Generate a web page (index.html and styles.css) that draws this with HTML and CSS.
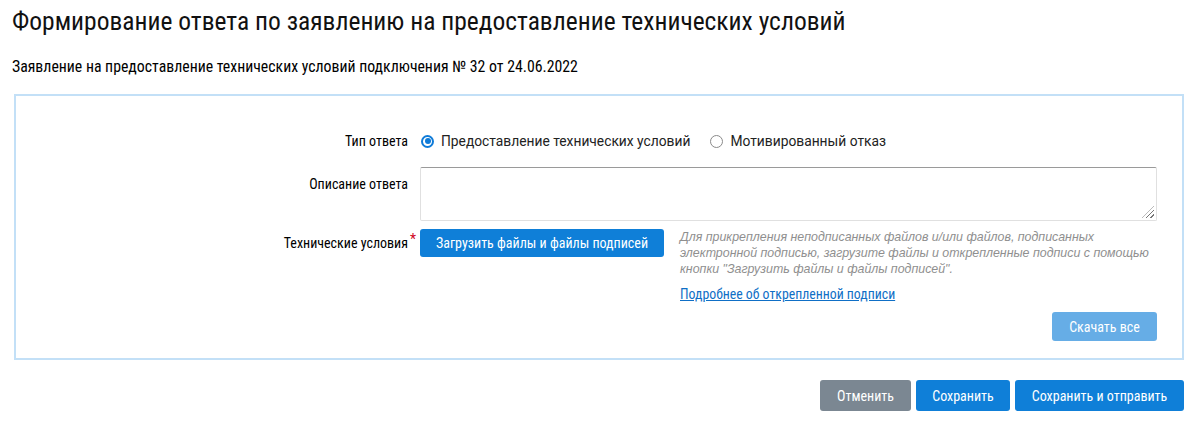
FILE: index.html
```html
<!DOCTYPE html>
<html lang="ru">
<head>
<meta charset="utf-8">
<link rel="stylesheet" href="styles.css">
</head>
<body>
<div class="page">
  <h1 class="title">Формирование ответа по заявлению на предоставление технических условий</h1>
  <div class="subtitle">Заявление на предоставление технических условий подключения № 32 от 24.06.2022</div>
  <div class="box">
    <div class="form">
      <div class="label label-radio">Тип ответа</div>
      <div class="radios">
        <label class="radio"><span class="dot on"></span>Предоставление технических условий</label>
        <label class="radio"><span class="dot"></span>Мотивированный отказ</label>
      </div>
      <div class="label label-top">Описание ответа</div>
      <div class="area"><span class="grip"></span></div>
      <div class="label label-btn"><span class="req-wrap">Технические условия<span class="req">*</span></span></div>
      <div class="files">
        <button class="btn btn-primary btn-upload">Загрузить файлы и файлы подписей</button>
        <div class="help">
          <p class="hint">Для прикрепления неподписанных файлов и/или файлов, подписанных электронной подписью, загрузите файлы и открепленные подписи с помощью кнопки "Загрузить файлы и файлы подписей".</p>
          <a class="link" href="#">Подробнее об открепленной подписи</a>
        </div>
      </div>
      <div class="download">
        <button class="btn btn-light">Скачать все</button>
      </div>
    </div>
  </div>
  <div class="actions">
    <button class="btn btn-gray">Отменить</button>
    <button class="btn btn-primary btn-act">Сохранить</button>
    <button class="btn btn-primary btn-act">Сохранить и отправить</button>
  </div>
</div>
</body>
</html>
```

FILE: styles.css
```css
* { box-sizing: border-box; }
html, body { margin: 0; padding: 0; background: #fff; }
body {
  font-family: "Roboto Condensed", "Liberation Sans Narrow", "DejaVu Sans Condensed", Roboto, sans-serif;
  font-stretch: condensed;
  color: #000;
}
.page { padding: 0 11px 0 14px; }
.title {
  margin: 0 0 0 -2px;
  padding-top: 6px;
  font-size: 25.5px;
  font-weight: 400;
  line-height: 30px;
  color: #111;
}
.subtitle {
  margin: 21px 0 0 -2px;
  font-size: 15.8px;
  line-height: 20px;
}
.box {
  margin-top: 17px;
  border: 2px solid #c3e0f7;
  padding: 35px 25px 17px 0;
}
.form {
  display: grid;
  grid-template-columns: 392px 1fr;
  column-gap: 12px;
}
.label {
  text-align: right;
  font-size: 14px;
  line-height: 20px;
}
.label-top { padding-top: 7px; margin-top: 16px; }
.label-btn { padding-top: 4px; }
.req-wrap { position: relative; }
.req {
  position: absolute;
  left: 100%;
  top: -6px;
  margin-left: 2px;
  color: #d0021b;
  font-size: 14px;
  line-height: 20px;
}
.radios { display: flex; gap: 19px; height: 20px; align-items: center; }
.radio {
  display: flex;
  align-items: center;
  font-family: Roboto, "Liberation Sans", sans-serif;
  font-stretch: normal;
  font-size: 13.8px;
  color: #222;
}
.dot {
  width: 13px; height: 13px;
  border: 1.5px solid #8a8a8a;
  border-radius: 50%;
  margin: 0 7px 0 1px;
  position: relative;
}
.dot.on { border: 2px solid #0f7bd8; }
.dot.on::after {
  content: "";
  position: absolute;
  left: 1.5px; top: 1.5px;
  width: 6px; height: 6px;
  border-radius: 50%;
  background: #0f7bd8;
}
.area {
  grid-column: 2;
  margin-top: 16px;
  height: 54px;
  border: 1px solid #e0e0e0;
  border-top-color: #9a9a9a;
  border-radius: 2px;
  position: relative;
}
.grip {
  position: absolute; right: 2px; bottom: 2px;
  width: 12px; height: 12px;
  background: repeating-linear-gradient(135deg, transparent 0 2px, #777 2px 3px);
  clip-path: polygon(100% 0, 100% 100%, 0 100%);
}
.label-btn, .files { margin-top: 8px; }
.files { display: flex; gap: 16px; align-items: flex-start; }
.btn {
  font-family: inherit;
  font-stretch: condensed;
  border: 0;
  border-radius: 3px;
  color: #fff;
  font-size: 14px;
  cursor: pointer;
}
.btn-primary { background: #0f7fd8; }
.btn-upload { width: 244px; height: 28px; flex: none; }
.help { flex: 1; }
.hint {
  margin: 0;
  font-family: "Liberation Sans", Arial, sans-serif;
  font-stretch: normal;
  font-style: italic;
  font-size: 12.4px;
  line-height: 16px;
  color: #8f8f8f;
  padding-right: 0;
}
.link {
  display: inline-block;
  margin-top: 9px;
  font-size: 13.8px;
  line-height: 16px;
  color: #0f6fc6;
}
.download {
  grid-column: 2;
  display: flex;
  justify-content: flex-end;
  margin-top: 9px;
}
.btn-light { background: #66ade6; width: 105px; height: 29px; }
.actions {
  display: flex;
  justify-content: flex-end;
  gap: 5px;
  margin-top: 20px;
}
.actions .btn { height: 31px; }
.btn-gray { background: #7b8792; width: 91px; }
.btn-act:nth-child(2) { width: 94px; }
.btn-act:nth-child(3) { width: 169px; }
```
